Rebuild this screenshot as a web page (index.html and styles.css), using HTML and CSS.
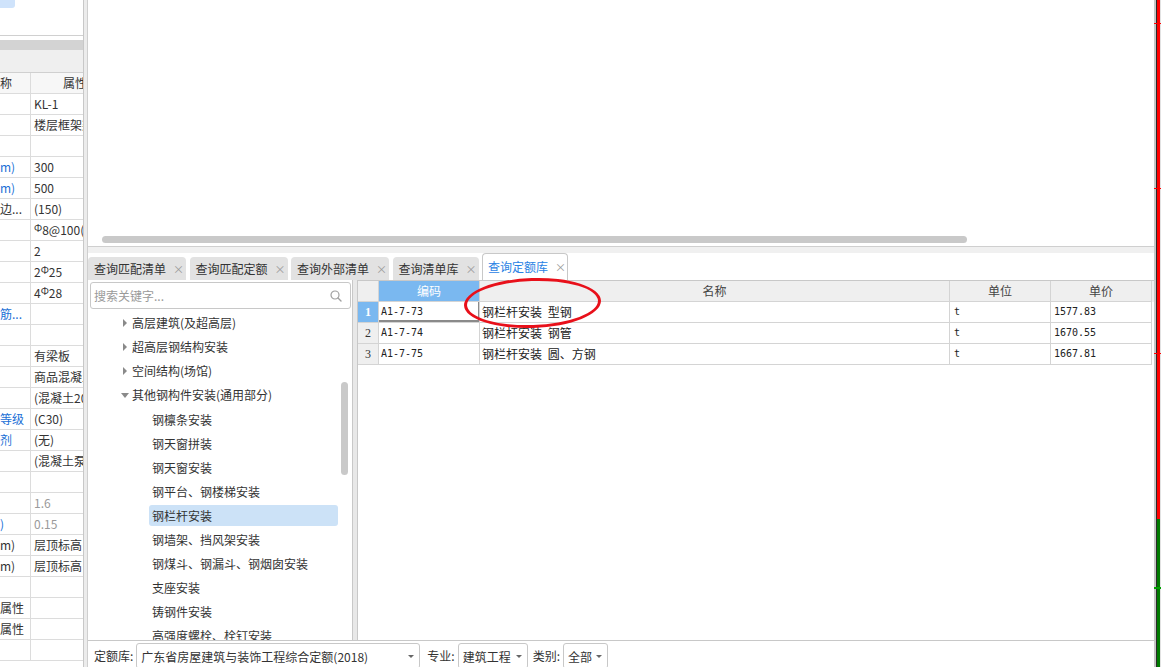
FILE: index.html
```html
<!DOCTYPE html>
<html lang="zh-CN">
<head>
<meta charset="utf-8">
<title>查询定额库</title>
<link rel="stylesheet" href="styles.css">
</head>
<body>
<div class="left">
  <div class="left-top"><div class="sel-chip"></div></div>
  <div class="left-gap"></div>
  <div class="left-bar"></div>
  <div class="left-band"></div>
  <div class="prow phead"><div class="pc1">称</div><div class="pc2 hc2">属性值</div></div>
  <div class="prow"><div class="pc1"></div><div class="pc2">KL-1</div></div>
  <div class="prow"><div class="pc1"></div><div class="pc2">楼层框架梁</div></div>
  <div class="prow"><div class="pc1"></div><div class="pc2"></div></div>
  <div class="prow"><div class="pc1 blue">m)</div><div class="pc2">300</div></div>
  <div class="prow"><div class="pc1 blue">m)</div><div class="pc2">500</div></div>
  <div class="prow"><div class="pc1">边...</div><div class="pc2">(150)</div></div>
  <div class="prow"><div class="pc1"></div><div class="pc2"><span class="rebar">Ф</span>8@100(2)</div></div>
  <div class="prow"><div class="pc1"></div><div class="pc2">2</div></div>
  <div class="prow"><div class="pc1"></div><div class="pc2">2<span class="rebar">Ф</span>25</div></div>
  <div class="prow"><div class="pc1"></div><div class="pc2">4<span class="rebar">Ф</span>28</div></div>
  <div class="prow"><div class="pc1 blue">筋...</div><div class="pc2"></div></div>
  <div class="prow"><div class="pc1"></div><div class="pc2"></div></div>
  <div class="prow"><div class="pc1"></div><div class="pc2">有梁板</div></div>
  <div class="prow"><div class="pc1"></div><div class="pc2">商品混凝土</div></div>
  <div class="prow"><div class="pc1"></div><div class="pc2">(混凝土20石)</div></div>
  <div class="prow"><div class="pc1 blue">等级</div><div class="pc2">(C30)</div></div>
  <div class="prow"><div class="pc1 blue">剂</div><div class="pc2">(无)</div></div>
  <div class="prow"><div class="pc1"></div><div class="pc2">(混凝土泵送)</div></div>
  <div class="prow"><div class="pc1"></div><div class="pc2"></div></div>
  <div class="prow"><div class="pc1"></div><div class="pc2 grey">1.6</div></div>
  <div class="prow"><div class="pc1 blue">)</div><div class="pc2 grey">0.15</div></div>
  <div class="prow"><div class="pc1">m)</div><div class="pc2">层顶标高</div></div>
  <div class="prow"><div class="pc1">m)</div><div class="pc2">层顶标高</div></div>
  <div class="prow"><div class="pc1"></div><div class="pc2"></div></div>
  <div class="prow"><div class="pc1">属性</div><div class="pc2"></div></div>
  <div class="prow"><div class="pc1">属性</div><div class="pc2"></div></div>
  <div class="prow"><div class="pc1"></div><div class="pc2"></div></div>
</div>
<div class="split-left"></div>
<div class="main">
  <div class="canvas"><div class="hthumb"></div></div>
  <div class="tabbar">
    <div class="tab">查询匹配清单<span class="x">×</span></div>
    <div class="tab">查询匹配定额<span class="x">×</span></div>
    <div class="tab">查询外部清单<span class="x">×</span></div>
    <div class="tab">查询清单库<span class="x">×</span></div>
    <div class="tab active">查询定额库<span class="x">×</span></div>
  </div>
  <div class="content">
    <div class="tree">
      <div class="search">
        <span class="ph">搜索关键字...</span>
        <svg class="mag" width="12" height="12" viewBox="0 0 12 12"><circle cx="5" cy="5" r="4" fill="none" stroke="#a0a0a0" stroke-width="1.2"/><path d="M8 8 L11 11" stroke="#a0a0a0" stroke-width="1.4" stroke-linecap="round"/></svg>
      </div>
      <div class="titem l1"><span class="arrow right"></span>高层建筑(及超高层)</div>
      <div class="titem l1"><span class="arrow right"></span>超高层钢结构安装</div>
      <div class="titem l1"><span class="arrow right"></span>空间结构(场馆)</div>
      <div class="titem l1"><span class="arrow down"></span>其他钢构件安装(通用部分)</div>
      <div class="titem l2"><span class="lbl">钢檩条安装</span></div>
      <div class="titem l2"><span class="lbl">钢天窗拼装</span></div>
      <div class="titem l2"><span class="lbl">钢天窗安装</span></div>
      <div class="titem l2"><span class="lbl">钢平台、钢楼梯安装</span></div>
      <div class="titem l2"><span class="lbl sel">钢栏杆安装</span></div>
      <div class="titem l2"><span class="lbl">钢墙架、挡风架安装</span></div>
      <div class="titem l2"><span class="lbl">钢煤斗、钢漏斗、钢烟囱安装</span></div>
      <div class="titem l2"><span class="lbl">支座安装</span></div>
      <div class="titem l2"><span class="lbl">铸钢件安装</span></div>
      <div class="titem l2"><span class="lbl">高强度螺栓、栓钉安装</span></div>
      <div class="vthumb"></div>
    </div>
    <div class="split-mid"></div>
    <div class="grid">
      <div class="grow ghead">
        <div class="gc num"></div>
        <div class="gc code hsel">编码</div>
        <div class="gc name">名称</div>
        <div class="gc unit">单位</div>
        <div class="gc price">单价</div>
      </div>
      <div class="grow">
        <div class="gc num nsel">1</div>
        <div class="gc code mono cur">A1-7-73</div>
        <div class="gc name txt">钢栏杆安装 型钢</div>
        <div class="gc unit mono">t</div>
        <div class="gc price mono">1577.83</div>
      </div>
      <div class="grow">
        <div class="gc num">2</div>
        <div class="gc code mono">A1-7-74</div>
        <div class="gc name txt">钢栏杆安装 钢管</div>
        <div class="gc unit mono">t</div>
        <div class="gc price mono">1670.55</div>
      </div>
      <div class="grow">
        <div class="gc num">3</div>
        <div class="gc code mono">A1-7-75</div>
        <div class="gc name txt">钢栏杆安装 圆、方钢</div>
        <div class="gc unit mono">t</div>
        <div class="gc price mono">1667.81</div>
      </div>
    </div>
  </div>
  <div class="bottombar">
    <span class="blabel">定额库:</span>
    <div class="select s1"><span>广东省房屋建筑与装饰工程综合定额(2018)</span><i class="caret"></i></div>
    <span class="blabel">专业:</span>
    <div class="select s2"><span>建筑工程</span><i class="caret"></i></div>
    <span class="blabel">类别:</span>
    <div class="select s3"><span>全部</span><i class="caret"></i></div>
  </div>
</div>
<div class="edge"></div>
<div class="mark-ellipse"></div>
</body>
</html>
```
FILE: styles.css
```css
* { box-sizing: border-box; }
html, body { margin: 0; padding: 0; }
body {
  width: 1161px;
  height: 667px;
  overflow: hidden;
  display: flex;
  background: #fff;
  font-family: "Noto Sans CJK SC", "Microsoft YaHei", sans-serif;
  font-size: 12px;
  color: #333;
  position: relative;
}

/* left property panel */
.left {
  width: 84px;
  flex-shrink: 0;
  border-right: 1px solid #c8c8c8;
  display: flex;
  flex-direction: column;
  overflow: hidden;
}
.left-top { height: 36px; flex-shrink: 0; border-bottom: 1px solid #d0d0d0; }
.sel-chip { width: 15px; height: 8px; background: #cfe3fb; border-radius: 0 0 3px 0; }
.left-gap { height: 4px; flex-shrink: 0; }
.left-bar { height: 10px; flex-shrink: 0; background: #d3d3d3; }
.left-band { height: 23px; flex-shrink: 0; background: #efefef; border-bottom: 1px solid #d0d0d0; }
.prow {
  display: flex;
  height: 21px;
  flex-shrink: 0;
  line-height: 20px;
  border-bottom: 1px solid #dcdcdc;
}
.phead { background: #f7f7f7; }
.pc1 { width: 31px; flex-shrink: 0; border-right: 1px solid #dcdcdc; white-space: nowrap; overflow: hidden; }
.pc2 { flex: 1; padding-left: 3px; white-space: nowrap; overflow: hidden; }
.hc2 { padding-left: 32px; }
.blue { color: #1a6fd6; }
.grey { color: #9a9a9a; }
.rebar { font-size: 10px; position: relative; top: -3px; }

.split-left { width: 3px; flex-shrink: 0; background: #ececec; }

/* main area */
.main {
  width: 1067px;
  flex-shrink: 0;
  border-left: 1px solid #cfcfcf;
  display: flex;
  flex-direction: column;
}
.canvas {
  height: 247px;
  flex-shrink: 0;
  border-bottom: 1px solid #cfcfcf;
  display: flex;
  align-items: flex-end;
  padding: 0 0 3px 14px;
}
.hthumb { width: 865px; height: 7px; background: #c9c9c9; border-radius: 4px; }

.tabbar {
  height: 33px;
  flex-shrink: 0;
  display: flex;
  align-items: flex-end;
  gap: 3.5px;
  background: linear-gradient(#f0f0f0 0 6px, #fff 6px);
}
.tab {
  height: 23px;
  line-height: 23px;
  padding: 0 6px;
  background: #e2e2e2;
  border-radius: 4px 4px 0 0;
  white-space: nowrap;
  color: #333;
}
.tab .x { display: inline-block; width: 7px; margin-left: 7px; color: #9a9a9a; font-size: 11px; }
.tab.active {
  height: 27px;
  line-height: 26px;
  background: #fff;
  border: 1px solid #c8c8c8;
  border-bottom: none;
  color: #2a82e4;
  padding: 0 5px;
}

.content { height: 360px; flex-shrink: 0; display: flex; }

/* tree */
.tree {
  width: 265px;
  flex-shrink: 0;
  border-right: 1px solid #c8c8c8;
  position: relative;
  overflow: hidden;
  padding-left: 2px;
}
.search {
  margin: 2px 0 2px 0;
  width: 261px;
  height: 27px;
  border: 1px solid #c8c8c8;
  border-radius: 3px;
  display: flex;
  align-items: center;
  padding: 0 8px 0 3px;
}
.ph { color: #9a9a9a; flex: 1; }
.mag { display: block; }
.titem { height: 24px; line-height: 24px; white-space: nowrap; color: #333; }
.l1 { padding-left: 33px; }
.arrow { display: inline-block; width: 9px; height: 8px; vertical-align: middle; position: relative; top: -2px; }
.arrow.right { border-left: 4px solid #8a8a8a; border-top: 4px solid transparent; border-bottom: 4px solid transparent; width: 0; margin-right: 5px; }
.arrow.down { border-top: 5px solid #8a8a8a; border-left: 4px solid transparent; border-right: 4px solid transparent; width: 0; height: 0; margin-left: -2px; margin-right: 3px; top: -1px; }
.l2 { padding-left: 59px; }
.lbl { display: inline-block; padding-left: 3px; height: 21px; line-height: 21px; margin-top: 2px; vertical-align: top; }
.lbl.sel { width: 189px; background: #cce2f7; border-radius: 3px; }
.vthumb { position: absolute; left: 253px; top: 102px; width: 7px; height: 93px; background: #c9c9c9; border-radius: 4px; }

.split-mid { width: 5px; flex-shrink: 0; background: #e8e8e8; border-right: 1px solid #c8c8c8; }

/* grid */
.grid { flex: 1; border-top: 1px solid #c8c8c8; background: #fff; }
.grow { display: flex; height: 21px; }
.ghead { background: #efefef; height: 21px; }
.gc {
  height: 21px;
  border-right: 1px solid #d4d4d4;
  border-bottom: 1px solid #d4d4d4;
  line-height: 20px;
  white-space: nowrap;
  overflow: hidden;
  flex-shrink: 0;
}
.ghead .gc { text-align: center; color: #444; }
.num { width: 21px; background: #efefef; text-align: center; font-family: "Liberation Serif", serif; font-size: 12px; color: #333; }
.code { width: 101px; padding-left: 2px; }
.name { width: 470px; padding-left: 2px; }
.unit { width: 101px; padding-left: 4px; }
.price { width: 101px; padding-left: 3px; }
.ghead .code, .ghead .name, .ghead .unit, .ghead .price { padding-left: 0; }
.ghead .hsel { background: #7ab8f0; color: #fff; }
.nsel { background: #7ab8f0; color: #fff; font-weight: bold; }
.mono { font-family: "DejaVu Sans Mono", "Liberation Mono", monospace; font-size: 10px; color: #222; }
.txt { color: #222; word-spacing: 3px; }
.cur { box-shadow: inset -1px -2px 0 #8a8a8a; }

/* bottom bar */
.bottombar {
  flex: 1;
  border-top: 1px solid #c8c8c8;
  display: flex;
  align-items: flex-start;
  padding: 2px 0 0 6px;
  overflow: hidden;
}
.blabel { line-height: 26px; color: #333; margin-right: 3px; white-space: nowrap; }
.select {
  height: 26px;
  border: 1px solid #c8c8c8;
  border-radius: 3px;
  display: flex;
  align-items: center;
  padding: 0 5px 0 4px;
  white-space: nowrap;
  color: #333;
  flex-shrink: 0;
}
.select span { flex: 1; }
.caret { display: block; width: 0; height: 0; border-top: 3px solid #666; border-left: 3px solid transparent; border-right: 3px solid transparent; }
.s1 { width: 284px; margin-right: 7px; }
.s2 { width: 70px; margin-right: 5px; }
.s3 { width: 45px; }

/* right screen edge */
.edge {
  width: 7px;
  flex-shrink: 0;
  background:
    linear-gradient(to bottom, transparent 23px, #ff0000 23px 24px, transparent 24px 188px, #ff0000 188px 189px, transparent 189px 353px, #ff0000 353px 354px, transparent 354px 587px, #00a000 587px 589px, transparent 589px),
    linear-gradient(to right, #c6c6c6 0 2px, #2a2a2a 2px 3px, transparent 3px 6px, #e2e2e2 6px 7px),
    linear-gradient(to bottom, #ff0000 0 519px, #007a00 519px);
}

/* annotation overlay */
.mark-ellipse {
  position: absolute;
  left: 464px;
  top: 278px;
  width: 137px;
  height: 50px;
  border: 3px solid #e8101a;
  border-radius: 50%;
  transform: rotate(-2deg);
  pointer-events: none;
}
```
